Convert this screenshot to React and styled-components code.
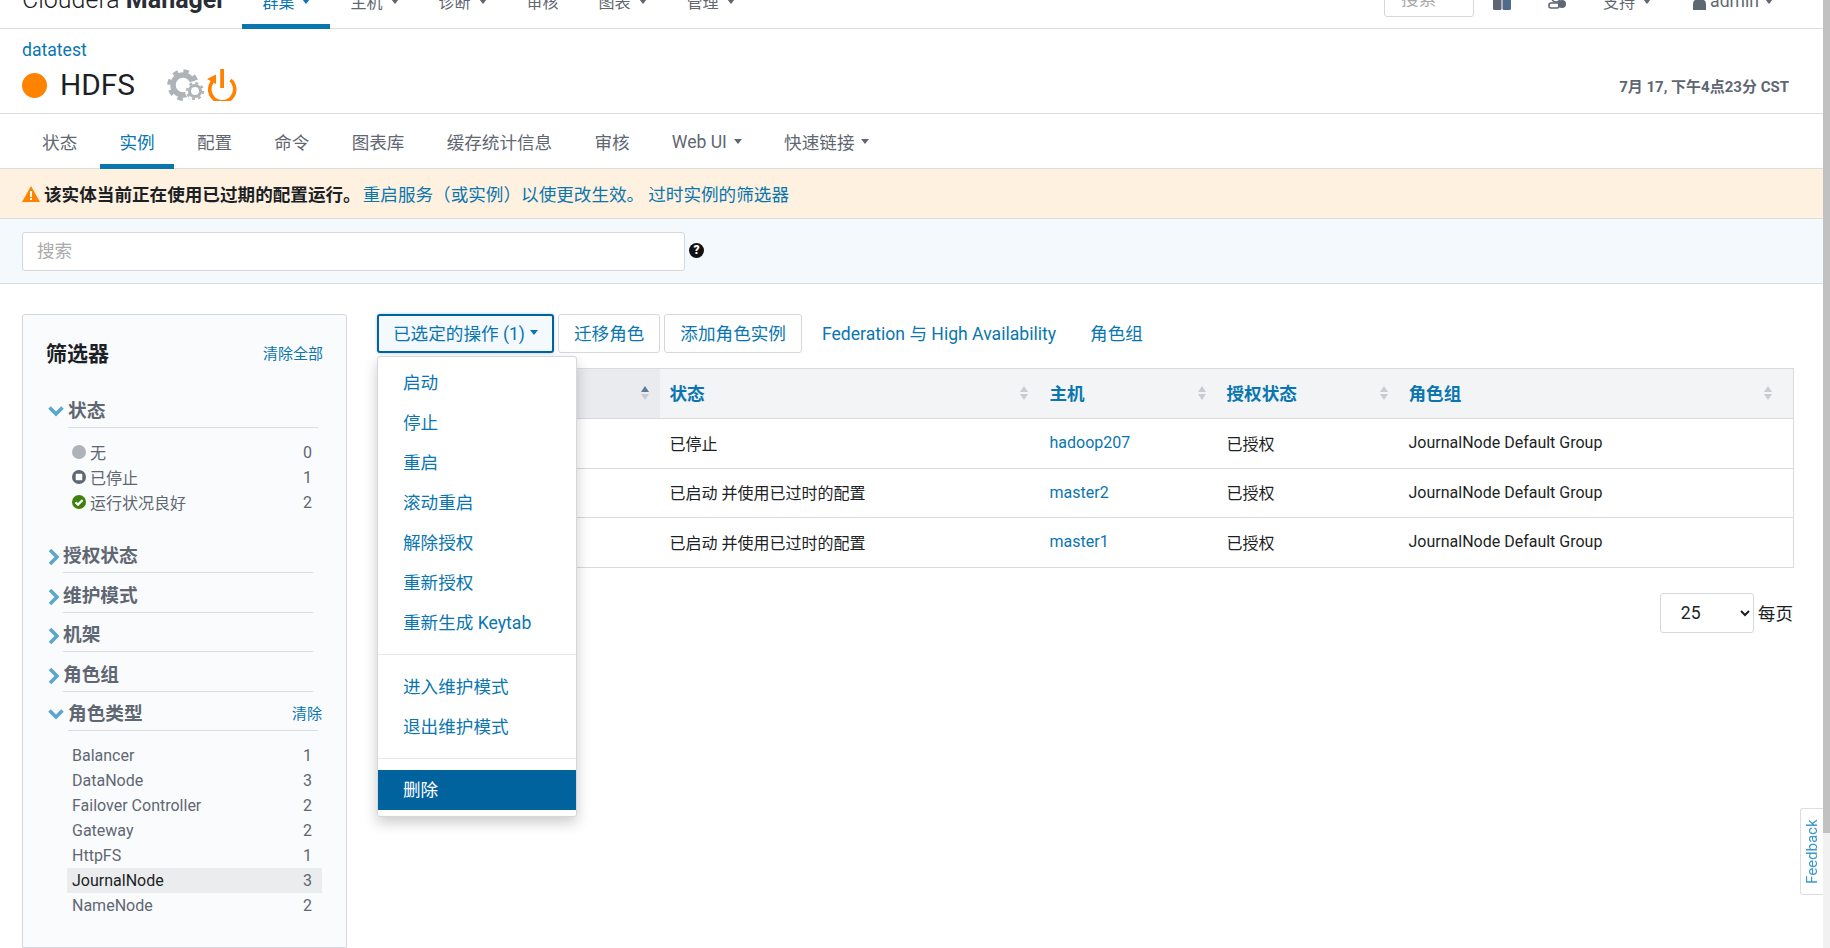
import React from 'react'
import styled, { createGlobalStyle } from 'styled-components'

const FONT = `Roboto, "Noto Sans CJK SC", sans-serif`
const BLUE = '#0a76b0'
const GREY = '#5f6772'
const LINE = '#dcdde0'

const GlobalStyle = createGlobalStyle`
    html, body {
        margin: 0;
        height: 100%;
        overflow: hidden;
        background: #fff;
    }
    body {
        font-family: ${FONT};
        font-size: 16px;
        color: #1c1f25;
    }
    * { box-sizing: border-box; }
`

const Page = styled.div`
    height: 948px;
    display: flex;
    flex-direction: column;
    overflow: hidden;
`

/* top bar, scrolled partly out of view */
const TopBar = styled.div`
    height: 29px;
    flex: none;
    overflow: hidden;
    display: flex;
    align-items: flex-end;
    padding: 0 57px 0 22px;
    box-shadow: inset 0 -1px 0 ${LINE};
`
const Logo = styled.div`
    font-size: 25px;
    line-height: 30px;
    font-weight: 300;
    color: #1c1f25;
    padding-bottom: 14px;
    margin-right: 17px;
    white-space: nowrap;
    b { font-weight: 700; color: #2a2e35; }
`
const NavItem = styled.div`
    display: flex;
    align-items: center;
    gap: 8px;
    height: 24px;
    box-sizing: content-box;
    padding: 0 20px ${p => (p.$active ? '11px' : '16px')};
    border-bottom: ${p => (p.$active ? `5px solid ${BLUE}` : 'none')};
    color: ${p => (p.$active ? BLUE : GREY)};
    white-space: nowrap;
`
const Caret = styled.span`
    display: inline-block;
    flex: none;
    width: 0;
    height: 0;
    border-left: 4.5px solid transparent;
    border-right: 4.5px solid transparent;
    border-top: 5.5px solid currentColor;
`
const TopRight = styled.div`
    margin-left: auto;
    display: flex;
    align-items: flex-end;
    color: ${GREY};
`
const TopSearch = styled.div`
    width: 90px;
    height: 39px;
    margin-bottom: 12px;
    padding: 6px 16px 0;
    border: 1px solid #d5d7dc;
    border-radius: 3px;
    font-size: 17.6px;
    color: #aaa;
`
const TopIcon = styled.svg`
    display: block;
    margin-left: ${p => p.$left}px;
    margin-bottom: 19px;
`
const TopLink = styled.div`
    display: flex;
    align-items: center;
    gap: ${p => p.$gap || 8}px;
    height: 24px;
    margin-left: ${p => p.$left}px;
    margin-bottom: 16px;
    font-size: ${p => p.$size || 16}px;
    white-space: nowrap;
`

/* service header */
const Header = styled.div`
    height: 85px;
    flex: none;
    padding: 10px 41px 0 22px;
    box-shadow: inset 0 -1px 0 ${LINE};
    display: flex;
    flex-direction: column;
`
const Cluster = styled.a`
    color: ${BLUE};
    font-size: 17.6px;
    line-height: 22px;
`
const ServiceRow = styled.div`
    display: flex;
    align-items: center;
    height: 36px;
    margin-top: 6px;
`
const StatusDot = styled.span`
    width: 25px;
    height: 25px;
    border-radius: 50%;
    background: #ff8200;
    flex: none;
`
const ServiceName = styled.h1`
    margin: 0 32px 0 13px;
    font-size: 29.8px;
    font-weight: 400;
    line-height: 36px;
`
const PowerWrap = styled.span`
    display: flex;
    margin-left: 2px;
`
const Clock = styled.div`
    margin-left: auto;
    font-size: 15px;
    font-weight: 700;
    color: ${GREY};
`

/* tabs */
const Tabs = styled.div`
    height: 55px;
    flex: none;
    display: flex;
    padding-left: 21px;
    box-shadow: inset 0 -1px 0 ${LINE};
`
const Tab = styled.div`
    display: flex;
    align-items: center;
    gap: 7px;
    margin: 0 1.6px;
    padding: 5px 19.5px 0;
    font-size: 17.6px;
    white-space: nowrap;
    color: ${p => (p.$active ? BLUE : GREY)};
    border-bottom: 5px solid ${p => (p.$active ? BLUE : 'transparent')};
`

/* banners */
const Alert = styled.div`
    height: 50px;
    flex: none;
    display: flex;
    align-items: center;
    padding-left: 22px;
    background: #fff1df;
    border-bottom: 1px solid ${LINE};
    font-size: 17.6px;
    white-space: nowrap;
    b { font-weight: 700; margin: 0 2px 0 4px; }
    a { color: ${BLUE}; margin-right: 4px; }
`
const SearchBand = styled.div`
    height: 65px;
    flex: none;
    display: flex;
    align-items: center;
    padding: 0 22px;
    background: #f4f9fd;
    border-bottom: 1px solid ${LINE};
`
const SearchInput = styled.input`
    width: 663px;
    height: 39px;
    padding: 0 14px;
    border: 1px solid #d5d7dc;
    border-radius: 3px;
    background: #fff;
    font: 17.6px ${FONT};
    &::placeholder { color: #aaa; }
`
const Help = styled.span`
    width: 15px;
    height: 15px;
    margin: 0 0 2px 4px;
    display: flex;
    align-items: center;
    justify-content: center;
    border-radius: 50%;
    background: #111;
    color: #fff;
    font-size: 12px;
    font-weight: 900;
    line-height: 1;
`

/* main area */
const Main = styled.div`
    flex: 1;
    min-height: 0;
    display: flex;
    gap: 30px;
    padding: 30px 37px 0 22px;
`
const FilterCard = styled.aside`
    width: 325px;
    flex: none;
    padding: 23px 23px 0 23px;
    background: #fafbfd;
    border: 1px solid #d5d7dc;
    border-radius: 3px 3px 0 0;
    color: ${GREY};
`
const FilterTop = styled.div`
    display: flex;
    justify-content: space-between;
    align-items: center;
    height: 28px;
    margin-bottom: 33px;
`
const FilterTitle = styled.div`
    font-size: 21px;
    font-weight: 700;
    color: #1c1f25;
`
const SmallLink = styled.a`
    color: ${BLUE};
    font-size: 15px;
    white-space: nowrap;
`
const Group = styled.div`
    margin-bottom: 10.6px;
`
const GroupHead = styled.div`
    display: flex;
    align-items: flex-start;
`
const Chevron = styled.svg`
    flex: none;
    margin: 4px 4px 0 2px;
`
const GroupLabel = styled.div`
    width: 250px;
    height: 29px;
    padding-bottom: 4px;
    display: flex;
    justify-content: space-between;
    align-items: center;
    border-bottom: 1px solid ${LINE};
    font-size: 18.7px;
    font-weight: 700;
    line-height: 24px;
    ${SmallLink} { font-weight: 400; margin-right: -4px; }
`
const FilterList = styled.div`
    margin: 11.5px 0 29.5px 21px;
`
const FilterRow = styled.div`
    display: flex;
    align-items: center;
    height: 25px;
    width: 255px;
    padding: 0 10px 0 5px;
    font-size: 16px;
    background: ${p => (p.$selected ? '#ebecee' : 'transparent')};
    color: ${p => (p.$selected ? '#1c1f25' : GREY)};
`
const RowCount = styled.span`
    margin-left: auto;
    color: ${GREY};
`
const RowIcon = styled.svg`
    flex: none;
    margin-right: 4px;
`

const Content = styled.div`
    position: relative;
    flex: 1;
    min-width: 0;
`
const Toolbar = styled.div`
    display: flex;
    align-items: center;
    height: 39px;
    margin-bottom: 15px;
    font-size: 17.6px;
`
const Button = styled.div`
    height: 39px;
    display: flex;
    align-items: center;
    gap: 5px;
    padding: 0 15px 2px;
    margin-right: 4px;
    color: ${BLUE};
    border: 1px solid #d5d7dc;
    border-radius: 3px;
    white-space: nowrap;
    ${p => p.$open && `
        border: 2px solid #00639e;
        padding: 0 14px 2px;
        background: #f4f9fd;
        box-shadow: 0 0 3px rgba(0, 99, 158, .35);
    `}
`
const ToolLink = styled.a`
    color: ${BLUE};
    margin-left: ${p => p.$left}px;
    padding-bottom: 2px;
    white-space: nowrap;
`
const Table = styled.table`
    width: 100%;
    table-layout: fixed;
    border-collapse: collapse;
    border: 1px solid #d9dade;
`
const Th = styled.th`
    width: ${p => p.$w}px;
    height: 50px;
    padding: 0 ${p => p.$pad || 12}px 2px 10px;
    background: ${p => (p.$sorted ? '#e9ebee' : '#f3f4f6')};
    border-bottom: 1px solid #d9dade;
    color: ${BLUE};
    font-size: 17.6px;
    font-weight: 700;
    text-align: left;
`
const ThInner = styled.div`
    display: flex;
    justify-content: space-between;
    align-items: center;
`
const Td = styled.td`
    height: 49.5px;
    padding: 0 10px 1px;
    border-bottom: 1px solid #d9dade;
    font-size: 16px;
    a { color: ${BLUE}; }
`
const SortWrap = styled.span`
    display: flex;
    flex-direction: column;
    gap: 2px;
`
const SortArrow = styled.span`
    width: 0;
    height: 0;
    border-left: 4px solid transparent;
    border-right: 4px solid transparent;
    ${p => (p.$down ? 'border-top' : 'border-bottom')}: 6px solid ${p => (p.$on ? '#5f7a94' : '#c8ccd1')};
`
const Pager = styled.div`
    display: flex;
    justify-content: flex-end;
    align-items: center;
    gap: 4px;
    margin-top: 25px;
    font-size: 17.6px;
`
const PageSelect = styled.select`
    width: 94px;
    height: 40px;
    padding: 0 16px;
    background: #fff;
    border: 1px solid #d5d7dc;
    border-radius: 3px;
    color: #1c1f25;
    font: 17.6px ${FONT};
`

/* open dropdown lies over the table */
const Menu = styled.div`
    position: absolute;
    left: 0;
    top: 42px;
    width: 200px;
    height: 461px;
    padding-top: 6px;
    background: #fff;
    border: 1px solid #d5d7dc;
    border-radius: 3px;
    box-shadow: 0 6px 14px rgba(0, 0, 0, .2);
    z-index: 5;
`
const MenuItem = styled.div`
    height: 40px;
    display: flex;
    align-items: center;
    padding: 0 0 3px 25px;
    font-size: 17.6px;
    color: ${p => (p.$hover ? '#fff' : BLUE)};
    background: ${p => (p.$hover ? '#00639e' : 'transparent')};
`
const MenuDivider = styled.div`
    height: 1px;
    margin: 11px 0 11.5px;
    background: #e6e7ea;
`

/* browser scrollbar and the feedback tab over the page */
const Scrollbar = styled.div`
    position: fixed;
    top: 0;
    right: 0;
    width: 7px;
    height: 948px;
    background: #f1f1f1;
    &::before {
        content: '';
        display: block;
        height: 833px;
        background: #c1c1c1;
    }
`
const Feedback = styled.div`
    position: fixed;
    right: 7px;
    top: 808px;
    width: 23px;
    height: 87px;
    display: flex;
    align-items: center;
    justify-content: center;
    background: #fff;
    border: 1px solid #dcdde0;
    border-left: none;
    border-radius: 0 3px 3px 0;
    color: #3a97c6;
    font-size: 15px;
    writing-mode: vertical-rl;
    transform: rotate(180deg);
    transform-origin: center;
`

const ArrowChevron = ({ open }) =>
    open ? (
        <Chevron width="16" height="16" viewBox="0 0 16 16">
            <polyline points="1.5,4.5 8,11 14.5,4.5" fill="none" stroke="#5ba6cc" strokeWidth="3.6" />
        </Chevron>
    ) : (
        <Chevron width="11" height="18" viewBox="0 0 11 18">
            <polyline points="2,2 9,9 2,16" fill="none" stroke="#5ba6cc" strokeWidth="3.6" />
        </Chevron>
    )

const StateIcon = ({ kind }) => (
    <RowIcon width="14" height="14" viewBox="0 0 14 14">
        {kind === 'none' && <circle cx="7" cy="7" r="7" fill="#aeb3b8" />}
        {kind === 'stopped' && (
            <>
                <circle cx="7" cy="7" r="7" fill="#5f6772" />
                <rect x="3.7" y="3.7" width="6.6" height="6.6" rx="1" fill="#fff" />
            </>
        )}
        {kind === 'good' && (
            <>
                <circle cx="7" cy="7" r="7" fill="#3f7f0d" />
                <polyline points="3.5,7.2 6,9.6 10.6,4.9" fill="none" stroke="#fff" strokeWidth="2.2" />
            </>
        )}
    </RowIcon>
)

const Gears = () => (
    <svg width="38" height="32" viewBox="0 0 38 32">
        <circle cx="16" cy="16" r="10" fill="none" stroke="#aeb3b8" strokeWidth="5.5" />
        <circle cx="16" cy="16" r="14" fill="none" stroke="#aeb3b8" strokeWidth="3.5" strokeDasharray="5.5 5.5" />
        <circle cx="28" cy="22" r="10" fill="#fff" />
        <circle cx="28" cy="22" r="5.5" fill="none" stroke="#aeb3b8" strokeWidth="3" />
        <circle cx="28" cy="22" r="8" fill="none" stroke="#aeb3b8" strokeWidth="2.2" strokeDasharray="3 3.3" />
    </svg>
)

const Power = () => (
    <svg width="30" height="32" viewBox="0 0 30 32">
        <path d="M7 11 A12.5 12.5 0 1 0 23.5 11" fill="none" stroke="#ff8200" strokeWidth="3.6" />
        <polygon points="0,10 9,5.5 9,15" fill="#ff8200" />
        <rect x="13.2" y="0" width="3.8" height="19" fill="#ff8200" />
    </svg>
)

const Warning = () => (
    <svg width="18" height="16" viewBox="0 0 18 16">
        <path d="M9 0 L18 16 L0 16 Z" fill="#ff8200" />
        <rect x="8" y="5" width="2" height="6" fill="#fff" />
        <rect x="8" y="12" width="2" height="2" fill="#fff" />
    </svg>
)

const SortIcon = ({ on }) => (
    <SortWrap>
        <SortArrow $on={on} />
        <SortArrow $down />
    </SortWrap>
)

const columns = [
    { w: 282, sorted: true, pad: 11 },
    { w: 380, label: '状态', pad: 12 },
    { w: 177, label: '主机', pad: 11 },
    { w: 182, label: '授权状态', pad: 11 },
    { w: 395, label: '角色组', pad: 21 },
]

const rows = [
    { state: '已停止', host: 'hadoop207' },
    { state: '已启动 并使用已过时的配置', host: 'master2' },
    { state: '已启动 并使用已过时的配置', host: 'master1' },
]

const roleTypes = [
    ['Balancer', 1],
    ['DataNode', 3],
    ['Failover Controller', 2],
    ['Gateway', 2],
    ['HttpFS', 1],
    ['JournalNode', 3],
    ['NameNode', 2],
]

export default function App() {
    return (
        <Page>
            <GlobalStyle />
            <TopBar>
                <Logo>Cloudera <b>Manager</b></Logo>
                <NavItem $active>群集<Caret /></NavItem>
                <NavItem>主机<Caret /></NavItem>
                <NavItem>诊断<Caret /></NavItem>
                <NavItem>审核</NavItem>
                <NavItem>图表<Caret /></NavItem>
                <NavItem>管理<Caret /></NavItem>
                <TopRight>
                    <TopSearch>搜索</TopSearch>
                    <TopIcon $left={19} width="18" height="14" viewBox="0 0 18 14">
                        <rect width="8.5" height="14" rx="1.5" fill="#5f6772" />
                        <rect x="9.5" width="8.5" height="14" rx="1.5" fill="#4f6b8c" />
                    </TopIcon>
                    <TopIcon $left={37} width="19" height="14" viewBox="0 0 19 14">
                        <circle cx="8" cy="2" r="4" fill="none" stroke="#5f6772" strokeWidth="1.6" />
                        <rect x="1" y="7" width="10" height="5" rx="2" fill="none" stroke="#5f6772" strokeWidth="1.6" />
                        <circle cx="14" cy="8" r="4" fill="#5f6772" />
                    </TopIcon>
                    <TopLink $left={36}>支持<Caret /></TopLink>
                    <TopIcon $left={42} width="13" height="14" viewBox="0 0 13 14">
                        <path d="M0 14 V8 Q0 3 6.5 3 Q13 3 13 8 V14 Z" fill="#5f6772" />
                    </TopIcon>
                    <TopLink $left={4} $size={17.6} $gap={6}>admin<Caret /></TopLink>
                </TopRight>
            </TopBar>

            <Header>
                <Cluster>datatest</Cluster>
                <ServiceRow>
                    <StatusDot />
                    <ServiceName>HDFS</ServiceName>
                    <Gears />
                    <PowerWrap><Power /></PowerWrap>
                    <Clock>7月 17, 下午4点23分 CST</Clock>
                </ServiceRow>
            </Header>

            <Tabs>
                <Tab>状态</Tab>
                <Tab $active>实例</Tab>
                <Tab>配置</Tab>
                <Tab>命令</Tab>
                <Tab>图表库</Tab>
                <Tab>缓存统计信息</Tab>
                <Tab>审核</Tab>
                <Tab>Web UI<Caret /></Tab>
                <Tab>快速链接<Caret /></Tab>
            </Tabs>

            <Alert>
                <Warning />
                <b>该实体当前正在使用已过期的配置运行。</b>
                <a>重启服务（或实例）以使更改生效。</a>
                <a>过时实例的筛选器</a>
            </Alert>

            <SearchBand>
                <SearchInput placeholder="搜索" />
                <Help>?</Help>
            </SearchBand>

            <Main>
                <FilterCard>
                    <FilterTop>
                        <FilterTitle>筛选器</FilterTitle>
                        <SmallLink>清除全部</SmallLink>
                    </FilterTop>

                    <Group>
                        <GroupHead>
                            <ArrowChevron open />
                            <GroupLabel>状态</GroupLabel>
                        </GroupHead>
                        <FilterList>
                            <FilterRow><StateIcon kind="none" />无<RowCount>0</RowCount></FilterRow>
                            <FilterRow><StateIcon kind="stopped" />已停止<RowCount>1</RowCount></FilterRow>
                            <FilterRow><StateIcon kind="good" />运行状况良好<RowCount>2</RowCount></FilterRow>
                        </FilterList>
                    </Group>

                    {['授权状态', '维护模式', '机架', '角色组'].map(name => (
                        <Group key={name}>
                            <GroupHead>
                                <ArrowChevron />
                                <GroupLabel>{name}</GroupLabel>
                            </GroupHead>
                        </Group>
                    ))}

                    <Group>
                        <GroupHead>
                            <ArrowChevron open />
                            <GroupLabel>角色类型<SmallLink>清除</SmallLink></GroupLabel>
                        </GroupHead>
                        <FilterList>
                            {roleTypes.map(([name, count]) => (
                                <FilterRow key={name} $selected={name === 'JournalNode'}>
                                    {name}<RowCount>{count}</RowCount>
                                </FilterRow>
                            ))}
                        </FilterList>
                    </Group>
                </FilterCard>

                <Content>
                    <Toolbar>
                        <Button $open>已选定的操作 (1)<Caret /></Button>
                        <Button>迁移角色</Button>
                        <Button>添加角色实例</Button>
                        <ToolLink $left={16}>Federation 与 High Availability</ToolLink>
                        <ToolLink $left={34}>角色组</ToolLink>
                    </Toolbar>

                    <Table>
                        <thead>
                            <tr>
                                {columns.map((col, i) => (
                                    <Th key={i} $w={col.w} $sorted={col.sorted} $pad={col.pad}>
                                        <ThInner>
                                            <span>{col.label}</span>
                                            <SortIcon on={col.sorted} />
                                        </ThInner>
                                    </Th>
                                ))}
                            </tr>
                        </thead>
                        <tbody>
                            {rows.map(row => (
                                <tr key={row.host}>
                                    <Td />
                                    <Td>{row.state}</Td>
                                    <Td><a>{row.host}</a></Td>
                                    <Td>已授权</Td>
                                    <Td>JournalNode Default Group</Td>
                                </tr>
                            ))}
                        </tbody>
                    </Table>

                    <Pager>
                        <PageSelect defaultValue="25">
                            <option value="25">25</option>
                            <option value="50">50</option>
                            <option value="100">100</option>
                        </PageSelect>
                        每页
                    </Pager>

                    <Menu>
                        <MenuItem>启动</MenuItem>
                        <MenuItem>停止</MenuItem>
                        <MenuItem>重启</MenuItem>
                        <MenuItem>滚动重启</MenuItem>
                        <MenuItem>解除授权</MenuItem>
                        <MenuItem>重新授权</MenuItem>
                        <MenuItem>重新生成 Keytab</MenuItem>
                        <MenuDivider />
                        <MenuItem>进入维护模式</MenuItem>
                        <MenuItem>退出维护模式</MenuItem>
                        <MenuDivider />
                        <MenuItem $hover>删除</MenuItem>
                    </Menu>
                </Content>
            </Main>

            <Feedback>Feedback</Feedback>
            <Scrollbar />
        </Page>
    )
}
